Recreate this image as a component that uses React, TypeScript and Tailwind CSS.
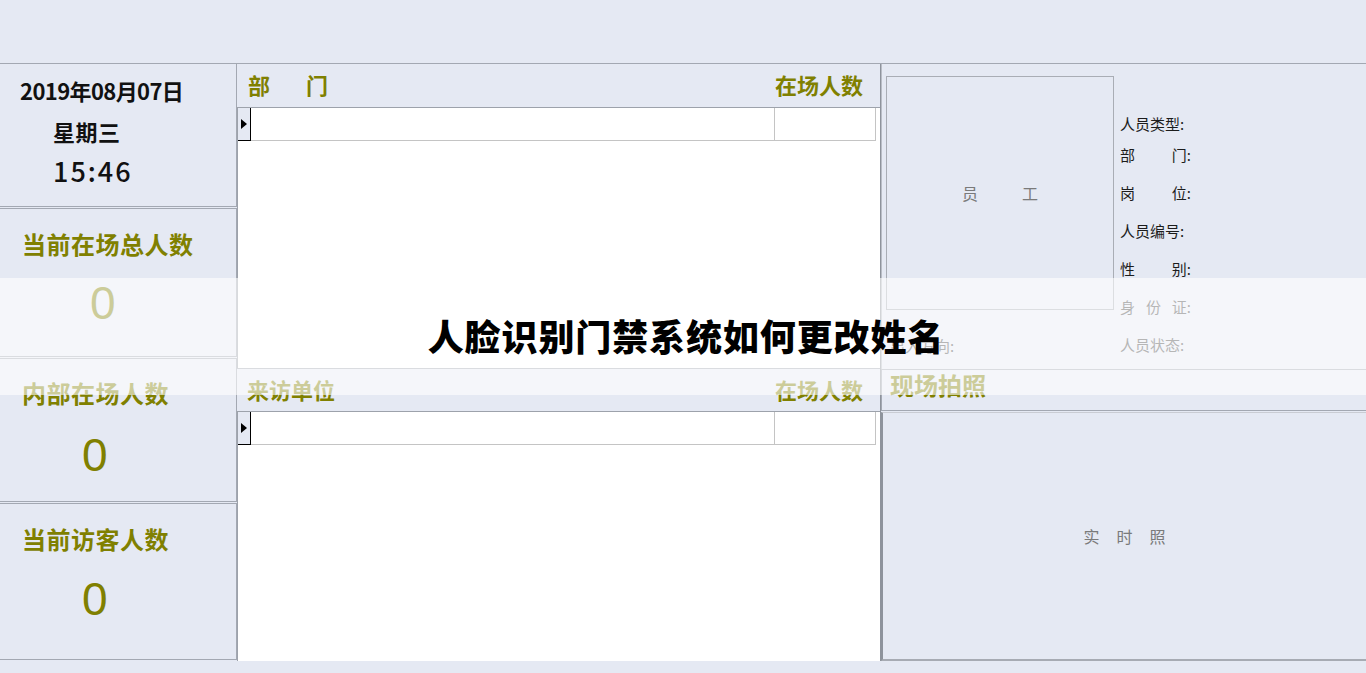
const FONT = { fontFamily: '"Noto Sans CJK SC", "Noto Sans", sans-serif' };

function LeftStat({ title, tTop, zTop, zLeft, h, last }: { title: string; tTop: number; zTop: number; zLeft: number; h: string; last?: boolean }) {
  return (
    <div className={`${h} border-t border-b border-r border-[#a3a8b2] ${last ? "" : "mb-[1px]"} bg-[#e5e9f3]`}>
      <div style={{ paddingTop: tTop }} className="pl-[22px]">
        <div className="text-[24px] font-bold leading-none tracking-[0.5px] text-[#808000]">{title}</div>
      </div>
      <div style={{ marginTop: zTop, paddingLeft: zLeft }}>
        <div className="text-[46px] leading-none text-[#808000]" style={{ fontFamily: '"Liberation Sans", Arial, sans-serif' }}>
          0
        </div>
      </div>
    </div>
  );
}

function GridArea({ h }: { h: string }) {
  return (
    <div className={`${h} border-t border-l border-[#9da2ab] bg-white`}>
      <div className="flex h-[33px] w-[638px]">
        <div className="flex w-[13px] items-center border-r border-b border-black bg-[#e5e9f3] pl-[3px]">
          <div className="h-0 w-0 border-y-[5px] border-l-[6px] border-y-transparent border-l-black" />
        </div>
        <div className="w-[524px] border-b border-r border-[#c4c4c4]" />
        <div className="w-[101px] border-b border-r border-[#c4c4c4]" />
      </div>
    </div>
  );
}

function InfoLabel({ parts, dim }: { parts: string[]; dim?: boolean }) {
  return (
    <div className={`flex w-[71px] justify-between text-[15px] leading-none ${dim ? "text-[#4a4a4a]" : "text-[#1c1c1c]"}`}>
      {parts.map((p, i) => (
        <span key={i}>{p}</span>
      ))}
    </div>
  );
}

export default function App() {
  return (
    <div className="relative h-[673px] w-[1366px] overflow-hidden bg-[#e5e9f3]" style={FONT}>
      {/* top blank bar */}
      <div className="h-[64px] border-b border-[#a3a8b2]" />

      <div className="flex h-[597px]">
        {/* left stats column */}
        <div className="flex w-[237px] flex-col">
          <div className="h-[143px] border-b border-r border-[#a3a8b2] mb-[1px]">
            <div className="pl-[20px] pt-[15px] text-[22px] font-bold leading-none tracking-[-0.6px] text-[#111]">2019年08月07日</div>
            <div className="pl-[53px] pt-[19px] text-[22px] font-bold leading-none tracking-[0.5px] text-[#111]">星期三</div>
            <div className="pl-[53px] pt-[15px] text-[27px] font-medium leading-none tracking-[2px] text-[#111]">
              15:46
            </div>
          </div>
          <LeftStat title="当前在场总人数" h="h-[149px]" tTop={23} zTop={24} zLeft={90} />
          <LeftStat title="内部在场人数" h="h-[144px]" tTop={22} zTop={27} zLeft={82} />
          <LeftStat title="当前访客人数" h="h-[157px]" tTop={23} zTop={25} zLeft={82} last />
        </div>

        {/* middle tables */}
        <div className="flex w-[644px] flex-col border-r border-[#8e939c]">
          <div className="flex h-[43px] items-center justify-between pb-[4px] pl-[11px] pr-[17px] text-[22px] font-bold leading-none text-[#808000]">
            <div className="flex gap-[36px]">
              <span>部</span>
              <span>门</span>
            </div>
            <span>在场人数</span>
          </div>
          <GridArea h="h-[261px]" />
          <div className="flex h-[43px] items-center justify-between border-t border-[#a3a8b2] pb-[2px] pl-[10px] pr-[17px] text-[22px] font-bold leading-none text-[#808000]">
            <span>来访单位</span>
            <span>在场人数</span>
          </div>
          <GridArea h="h-[250px]" />
        </div>

        {/* right info */}
        <div className="flex flex-1 flex-col">
          <div className="flex h-[305px] border-l border-[#b9bdc6]">
            <div className="flex flex-col pl-[4px] pt-[12px]">
              <div className="flex h-[234px] w-[228px] items-center justify-center gap-[44px] border border-[#a9adb5] text-[16px] text-[#7a7a7a]">
                <span>员</span>
                <span>工</span>
              </div>
              <div className="pl-[4px] pt-[28px]">
                <InfoLabel parts={["出入方向:"]} dim />
              </div>
            </div>
            <div className="flex flex-col gap-[23px] pl-[6px] pt-[52px]">
              <div className="mb-[-7px]">
                <InfoLabel parts={["人员类型:"]} />
              </div>
              <InfoLabel parts={["部", "门:"]} />
              <InfoLabel parts={["岗", "位:"]} />
              <InfoLabel parts={["人员编号:"]} />
              <InfoLabel parts={["性", "别:"]} />
              <InfoLabel parts={["身", "份", "证:"]} dim />
              <InfoLabel parts={["人员状态:"]} dim />
            </div>
          </div>
          <div className="flex h-[42px] items-center border-y border-l border-[#a3a8b2] pb-[10px] pl-[8px] text-[24px] font-bold leading-none text-[#808000]">
            现场拍照
          </div>
          <div className="mt-[1px] flex flex-1 items-center justify-center gap-[17px] border-t border-b-2 border-l-2 border-t-[#c9ccd3] border-b-[#a7abb3] border-l-[#8e939c] text-[16px] text-[#7a7a7a]">
            <span>实</span>
            <span>时</span>
            <span>照</span>
          </div>
        </div>
      </div>

      {/* article title overlay */}
      <div className="absolute left-0 top-[278px] flex h-[117px] w-full items-center justify-center bg-white/60 pb-[4px] pl-[6px]">
        <h1 className="text-[36px] font-black leading-none tracking-[0.9px] text-black">人脸识别门禁系统如何更改姓名</h1>
      </div>
    </div>
  );
}
